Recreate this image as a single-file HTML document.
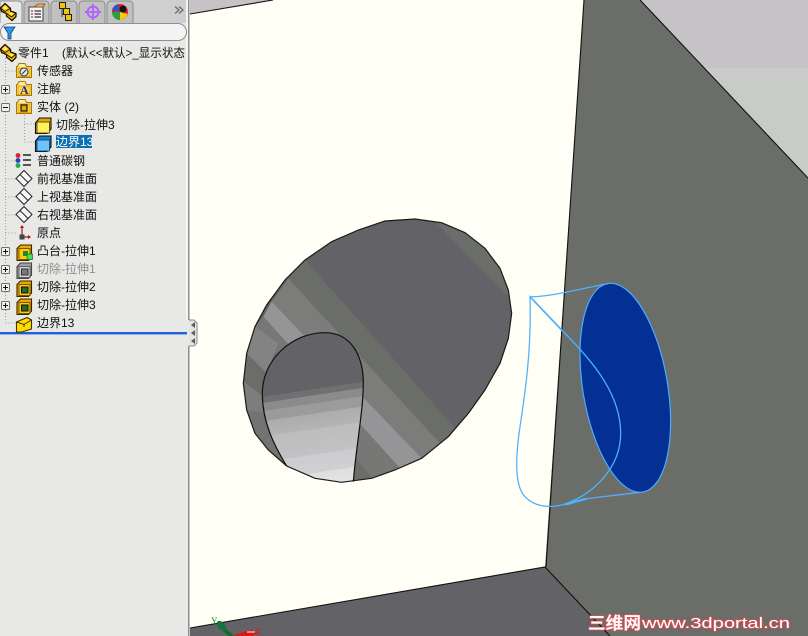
<!DOCTYPE html>
<html>
<head>
<meta charset="utf-8">
<style>
html,body{margin:0;padding:0;background:#e8e8e6;width:808px;height:636px;overflow:hidden}
svg{display:block;position:absolute;left:0;top:0}
.t{font-family:"Liberation Sans","WenQuanYi Zen Hei","Noto Sans CJK SC",sans-serif;font-size:12px;fill:#111}
</style>
</head>
<body>
<svg width="808" height="636" viewBox="0 0 808 636" xmlns="http://www.w3.org/2000/svg" shape-rendering="geometricPrecision">
<defs>
<linearGradient id="tear" gradientUnits="userSpaceOnUse" x1="230" y1="520" x2="275" y2="820">
<stop offset="0" stop-color="#636266"/><stop offset=".06" stop-color="#636266"/>
<stop offset=".06" stop-color="#6f706f"/><stop offset=".12" stop-color="#6f706f"/>
<stop offset=".12" stop-color="#8a8b8a"/><stop offset=".2" stop-color="#8a8b8a"/>
<stop offset=".2" stop-color="#9b9b9c"/><stop offset=".3" stop-color="#9b9b9c"/>
<stop offset=".3" stop-color="#acacac"/><stop offset=".45" stop-color="#b4b4b4"/>
<stop offset=".45" stop-color="#bdbdbe"/><stop offset=".7" stop-color="#c2c2c4"/>
<stop offset=".7" stop-color="#cdcdcf"/><stop offset=".88" stop-color="#d0d0d2"/>
<stop offset=".88" stop-color="#dededf"/><stop offset="1" stop-color="#e4e4e6"/>
</linearGradient>
<clipPath id="hole"><path id="holeP" d="M540 27L620 38L690 68L750 115L795 175L820 240L830 310L820 385L795 460L750 540L700 610L640 680L560 745L480 780L410 805L320 817L240 805L155 768L100 720L60 670L35 600L25 520L35 430L60 350L95 285L150 210L210 150L290 95L370 60L450 33Z"/></clipPath>
<clipPath id="paneClip"><rect x="0" y="44" width="186" height="16"/></clipPath>

<g id="blk">
<path d="M0.500 6L5 1.500L10.500 6.500V9L16 11V14.500L12 18.500L6.500 14V11.500L1.500 9.500Z" fill="#f7bf00" stroke="#1a1000" stroke-width="1.300" stroke-linejoin="round"/>
<path d="M1 6.500L5 9.500L10 6.500M6.500 11.500L11.500 15L16 11" fill="none" stroke="#1a1000" stroke-width=".9"/>
<path d="M5 3.500L8 6L5 8L2.500 6Z" fill="#ffe97a"/>
<path d="M11 10.500L14 12L11.500 13.500L9 11.500Z" fill="#ffe97a"/>
</g>
<g id="folder">
<path d="M0.500 4.500H1.500L3 1.500H9L10.500 4.500H15.500V15.500H0.500Z" fill="#ffeb9a" stroke="#a87800"/>
<rect x="2" y="6" width="12" height="8.500" fill="#ffd84a" stroke="#e09000" stroke-width=".8"/>
</g>
<g id="cut">
<path d="M1 4.500L4.500 1H15.500V13L12.500 16.500H1Z" fill="#f0a800" stroke="#3a2400" stroke-width="1.100"/>
<rect x="3" y="4.500" width="11" height="11" fill="#ffcc00" stroke="#604000" stroke-width=".8"/>
<rect x="5.500" y="7" width="6.500" height="6" fill="#1d6b2a" stroke="#111"/>
</g>
<g id="plane">
<path d="M8 .5L16 8.500L8 16.500L0 8.500Z" fill="#f6f6f4" stroke="#222"/>
<path d="M4 4.500L12 12.500" stroke="#222" fill="none"/>
</g>
</defs>

<!-- graphics area -->
<rect x="190" y="0" width="618" height="636" fill="#c5c3c6"/>
<rect x="640" y="68" width="168" height="120" fill="#c9cbc8"/>
<polygon points="584,0 640,0 808,178 808,636 610,636 545,567" fill="#6b6d69"/>
<polygon points="190,628 545,567 610,636 190,636" fill="#636266"/>
<polygon points="190,14 273,0 584,0 545,567 190,628" fill="#fffff5"/>
<g fill="none" stroke="#111" stroke-width="1.100">
<path d="M190 14L273 0"/>
<path d="M584 0L546 567"/>
<path d="M190 628L545 567L610 636"/>
<path d="M640 0L808 178"/>
</g>

<!-- hole -->
<g transform="translate(235 210) scale(.33333)">
<g clip-path="url(#hole)">
<rect x="0" y="0" width="860" height="840" fill="#636266"/>
<polygon points="585,20 850,290 850,0" fill="#6b6d69"/>
<polygon points="210,150 670,665 620,705 160,205" fill="#6b6d69"/>
<polygon points="160,205 620,705 560,745 110,275" fill="#7c7d7b"/>
<polygon points="110,275 560,745 495,775 85,320" fill="#959496"/>
<polygon points="85,320 495,775 410,805 60,350" fill="#777876"/>
<polygon points="60,350 410,805 355,825 35,430" fill="#6b6d69"/>
<polygon points="35,430 60,350 130,400 95,490" fill="#828382"/>
<polygon points="35,430 95,490 85,560 20,510" fill="#6b6d69"/>
<polygon points="20,510 85,560 85,610 35,600" fill="#7d7e7c"/>
<polygon points="35,600 85,610 120,710 155,768 100,720 60,670" fill="#737472"/>
<path d="M355 815C362 720 385 600 385 520C385 440 350 368 270 368C170 368 82 450 82 550C82 640 120 710 155 768L240 805L320 817Z" fill="url(#tear)"/>
</g>
<use href="#holeP" fill="none" stroke="#1a1a1a" stroke-width="3.600"/>
<path d="M355 815C362 720 385 600 385 520C385 440 350 368 270 368C170 368 82 450 82 550C82 640 120 710 155 768" fill="none" stroke="#111" stroke-width="3.600"/>
</g>

<!-- boundary feature -->
<ellipse cx="625.300" cy="387.800" rx="42.400" ry="105.700" transform="rotate(-9.500 625.300 387.800)" fill="#033092" stroke="#4aaeff" stroke-width="1.200"/>
<g transform="translate(505 270) scale(.33333)" fill="none" stroke="#4db2ff" stroke-width="3.800">
<path d="M75 80C130 82 230 55 310 41"/>
<path d="M75 80L170 180C260 270 347 370 347 490C347 590 270 670 180 702C140 715 90 712 60 680C30 650 30 570 45 470C60 370 80 240 75 80Z"/>
<path d="M180 704L245 686L405 667" stroke="#5fa8ff"/>
<path d="M180 704L245 686" stroke-width="7"/>
<path d="M75 80L170 180" stroke-width="5"/>
</g>

<!-- triad -->
<g>
<path d="M221 627L234 638" stroke="#0f6b2c" stroke-width="3.500"/>
<ellipse cx="221.500" cy="626" rx="3.500" ry="6" transform="rotate(-40 221.500 626)" fill="#14753a"/>
<path d="M232 636L243 632L252 630L257 633L250 637Z" fill="#d81818"/>
<path d="M247 632L255 632" stroke="#ff8a8a" stroke-width="1.800"/>
<text x="211" y="624" font-family="Liberation Serif,serif" font-size="9" fill="#0a8a20">Y</text>
<text x="255" y="635" font-family="Liberation Serif,serif" font-size="9" fill="#e01010">X</text>
</g>

<!-- watermark -->
<g font-family="Liberation Sans,'WenQuanYi Zen Hei','Noto Sans CJK SC',sans-serif" fill="#fff" stroke="#ee4a50" stroke-width="1.300" paint-order="stroke">
<text x="588" y="629" font-size="17" font-weight="700" textLength="53" lengthAdjust="spacingAndGlyphs">三维网</text>
<text x="642" y="628" font-size="15" textLength="148" lengthAdjust="spacingAndGlyphs">www.3dportal.cn</text>
</g>

<!-- side panel -->
<rect x="0" y="0" width="189" height="636" fill="#e8e8e6"/>
<rect x="0" y="0" width="189" height="23" fill="#cfcfcf"/>
<rect x="188" y="0" width="1.400" height="320" fill="#8f8f8f"/>
<rect x="186" y="0" width="2" height="320" fill="#f4f4f4"/>
<rect x="188" y="346" width="1.400" height="290" fill="#8f8f8f"/>
<path d="M189 320H194L197 323V343L194 346H189" fill="#e4e4e2" stroke="#8a8a8a"/>
<g fill="#5d5d5d">
<path d="M191 325L195 322V328Z"/><path d="M191 333L195 330V336Z"/><path d="M191 341L195 338V344Z"/>
</g>
<rect x="0" y="332" width="187" height="2.400" fill="#1f62d8"/>

<!-- tabs -->
<g fill="#c0c0c0" stroke="#8c8c8c">
<path d="M24 23V5Q24 1 28 1H45Q49 1 49 5V23"/>
<path d="M51 23V5Q51 1 55 1H73Q77 1 77 5V23"/>
<path d="M79 23V5Q79 1 83 1H101Q105 1 105 5V23"/>
<path d="M107 23V5Q107 1 111 1H129Q133 1 133 5V23"/>
</g>
<path d="M0 23V1H18Q22 1 22 5V23" fill="#e8e8e6" stroke="#8c8c8c"/>
<use href="#blk" x="0" y="2"/>
<g transform="translate(28 3)">
<rect x="1" y="4" width="14" height="14" fill="#f4f4f4" stroke="#444"/>
<path d="M3 8H5M3 11H5M3 14H5" stroke="#c03020" stroke-width="1.200"/>
<path d="M6.500 8H13M6.500 11H13M6.500 14H13" stroke="#333" stroke-width="1.200"/>
<path d="M6 4L10 1L17 1L15 4Z" fill="#e8b060" stroke="#7a5020" stroke-width=".8"/>
</g>
<g stroke="#222" fill="#f5c400">
<path d="M62 5V14H66M62 12V17" fill="none" stroke="#333" stroke-width=".9"/>
<rect x="59.500" y="2.500" width="6" height="6"/>
<rect x="63.500" y="8.500" width="6" height="6"/>
<rect x="65.500" y="14.500" width="6" height="6"/>
</g>
<g fill="none" stroke="#b060ff" stroke-width="1.800">
<circle cx="93" cy="12" r="5.500"/>
<path d="M93 4V20M85 12H101"/>
</g>
<g>
<circle cx="120" cy="12" r="8" fill="#e02020"/>
<path d="M112 12A8 8 0 0 0 120 20V12Z" fill="#2aa040"/>
<path d="M120 12V20A8 8 0 0 0 127.500 14Z" fill="#f0d000"/>
<path d="M112 10A8 8 0 0 1 118 4.300L120 12Z" fill="#3050d0"/>
<circle cx="123" cy="9" r="3.500" fill="#151515"/>
</g>
<path d="M175 6.500L179 10L175 13.500M179 6.500L183 10L179 13.500" fill="none" stroke="#6a6a6a" stroke-width="1.300"/>

<!-- filter bar -->
<rect x="0.500" y="23.500" width="186" height="17" rx="8.500" fill="#f4f4f4" stroke="#8f8f8f"/>
<path d="M4 27H15L11 33V39H8V33Z" fill="#2c9be8" stroke="#0a3a78" stroke-width=".8"/>

<!-- tree dotted lines -->
<g fill="none" stroke="#9a9a9a" stroke-dasharray="1 2">
<path d="M5.500 58V322"/>
<path d="M5.500 71H16M5.500 179H16M5.500 197H16M5.500 215H16M5.500 233H16M5.500 161H16M5.500 323H16"/>
<path d="M24.500 115V142M24.500 124H35M24.500 142H35"/>
</g>

<!-- root icon -->
<use href="#blk" x="0" y="43"/>

<!-- icons -->
<use href="#folder" x="16" y="62"/>
<circle cx="24" cy="72" r="4" fill="#dfe8f2" stroke="#333"/><path d="M22 74L26 70" stroke="#333"/>
<use href="#folder" x="16" y="80"/>
<text x="20" y="94" font-family="Liberation Serif,serif" font-weight="700" font-size="12" fill="#1a2aa0">A</text>
<use href="#folder" x="16" y="98"/>
<rect x="21" y="105" width="6" height="6" fill="#e8a800" stroke="#222" stroke-width="1.300"/>
<path d="M35.500 123L39.500 118H51V129L47 133.500H35.500Z" fill="#e0a800" stroke="#111" stroke-width="1.100"/>
<rect x="37" y="122" width="12.500" height="11" fill="#fff060" stroke="#443300" stroke-width=".8"/>
<path d="M35.500 141L39.500 136H51V147L47 151.500H35.500Z" fill="#1a80d0" stroke="#111" stroke-width="1.100"/>
<rect x="37" y="140" width="12.500" height="11" fill="#70c4f8" stroke="#0a3a70" stroke-width=".8"/>

<!-- material -->
<circle cx="18" cy="155.500" r="2.400" fill="#e02020"/><circle cx="18" cy="160.500" r="2.400" fill="#2040d8"/><circle cx="18" cy="165.500" r="2.400" fill="#20b040"/>
<path d="M23 155H31M23 160H31M23 165H31" stroke="#222" stroke-width="1.500"/>

<use href="#plane" x="16" y="170"/>
<use href="#plane" x="16" y="188"/>
<use href="#plane" x="16" y="206"/>

<!-- origin -->
<path d="M22 226V237H30" fill="none" stroke="#a01818" stroke-width="1.200"/>
<path d="M20 228L22 225L24 228ZM28 235L31 237L28 239Z" fill="#c01010"/>
<rect x="19.500" y="234.500" width="5" height="5" fill="#444"/>

<!-- features -->
<g transform="translate(16 244)">
<path d="M1 4.500L4.500 1H15.500V13L12.500 16.500H1Z" fill="#f0a800" stroke="#3a2400" stroke-width="1.100"/>
<rect x="3" y="4.500" width="11" height="11" fill="#ffcc00" stroke="#604000" stroke-width=".8"/>
<rect x="7" y="7" width="5" height="5" fill="#1d8b3a"/>
<rect x="11" y="10" width="5.500" height="5.500" fill="#40e050" stroke="#0a7020" stroke-width=".7"/>
</g>
<g transform="translate(16 262)">
<path d="M1 4.500L4.500 1H15.500V13L12.500 16.500H1Z" fill="#a0a0a0" stroke="#444" stroke-width="1.100"/>
<rect x="3" y="4.500" width="11" height="11" fill="#cfcfcf" stroke="#4a4a4a" stroke-width=".8"/>
<rect x="5.500" y="7" width="6.500" height="6" fill="#7a7a7a" stroke="#333"/>
</g>
<use href="#cut" x="16" y="280"/>
<use href="#cut" x="16" y="298"/>
<g transform="translate(16 316)">
<path d="M.5 6L11 1.500L15.500 4V13L6 16H.5Z" fill="#ffdc00" stroke="#403000" stroke-width="1.100"/>
<path d="M.5 6L8 8.500L15.500 4M8 8.500V11" fill="none" stroke="#403000"/>
</g>

<!-- expanders -->
<g fill="#f0f0ee" stroke="#6f6f6f">
<rect x="1.500" y="85.500" width="8" height="8" rx="1"/>
<rect x="1.500" y="103.500" width="8" height="8" rx="1"/>
<rect x="1.500" y="247.500" width="8" height="8" rx="1"/>
<rect x="1.500" y="265.500" width="8" height="8" rx="1"/>
<rect x="1.500" y="283.500" width="8" height="8" rx="1"/>
<rect x="1.500" y="301.500" width="8" height="8" rx="1"/>
</g>
<path d="M3 89.500H8M5.500 87V92M3 107.500H8M3 251.500H8M5.500 249V254M3 269.500H8M5.500 267V272M3 287.500H8M5.500 285V290M3 305.500H8M5.500 303V308" stroke="#111" fill="none"/>

<!-- labels -->
<g class="t">
<g clip-path="url(#paneClip)">
<text class="t" x="18" y="57">零件1</text>
<text class="t" x="62" y="57" textLength="123" lengthAdjust="spacingAndGlyphs">(默认&lt;&lt;默认&gt;_显示状态</text>
</g>
<text class="t" x="37" y="75">传感器</text>
<text class="t" x="37" y="93">注解</text>
<text class="t" x="37" y="111">实体 (2)</text>
<text class="t" x="56" y="129">切除-拉伸3</text>
<rect x="56" y="135" width="36" height="13" fill="#0b6fb3"/>
<text class="t" x="56" y="146" style="fill:#fff">边界13</text>
<text class="t" x="37" y="165">普通碳钢</text>
<text class="t" x="37" y="183">前视基准面</text>
<text class="t" x="37" y="201">上视基准面</text>
<text class="t" x="37" y="219">右视基准面</text>
<text class="t" x="37" y="237">原点</text>
<text class="t" x="37" y="255">凸台-拉伸1</text>
<text class="t" x="37" y="273" style="fill:#8e8e8e">切除-拉伸1</text>
<text class="t" x="37" y="291">切除-拉伸2</text>
<text class="t" x="37" y="309">切除-拉伸3</text>
<text class="t" x="37" y="327">边界13</text>
</g>
</svg>
</body>
</html>
